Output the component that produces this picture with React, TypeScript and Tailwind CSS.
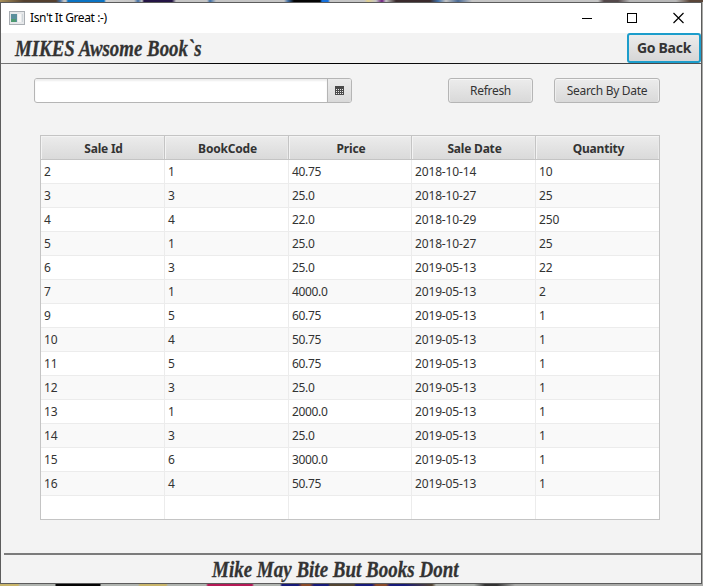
import React from "react";

const columns = ["Sale Id", "BookCode", "Price", "Sale Date", "Quantity"];

const sales = [
  ["2", "1", "40.75", "2018-10-14", "10"],
  ["3", "3", "25.0", "2018-10-27", "25"],
  ["4", "4", "22.0", "2018-10-29", "250"],
  ["5", "1", "25.0", "2018-10-27", "25"],
  ["6", "3", "25.0", "2019-05-13", "22"],
  ["7", "1", "4000.0", "2019-05-13", "2"],
  ["9", "5", "60.75", "2019-05-13", "1"],
  ["10", "4", "50.75", "2019-05-13", "1"],
  ["11", "5", "60.75", "2019-05-13", "1"],
  ["12", "3", "25.0", "2019-05-13", "1"],
  ["13", "1", "2000.0", "2019-05-13", "1"],
  ["14", "3", "25.0", "2019-05-13", "1"],
  ["15", "6", "3000.0", "2019-05-13", "1"],
  ["16", "4", "50.75", "2019-05-13", "1"],
  ["", "", "", "", ""],
];

const rowGrid = "grid h-6 grid-cols-[124px_124px_123px_124px_123px]";

function AppIcon() {
  return (
    <svg width="16" height="14" viewBox="0 0 16 14" shapeRendering="crispEdges">
      <rect x="0.5" y="0.5" width="15" height="13" fill="#e6e8ea" stroke="#a9aeb3" />
      <rect x="2" y="3" width="6" height="8" fill="#5a8f9c" />
      <rect x="2" y="8" width="5" height="3" fill="#4d9a70" />
      <rect x="9" y="3" width="3" height="8" fill="#f7f7f7" />
      <rect x="13" y="3" width="1" height="8" fill="#cfd6da" />
    </svg>
  );
}

function CalendarIcon() {
  return (
    <svg width="9" height="9" viewBox="0 0 9 9" shapeRendering="crispEdges">
      <rect width="9" height="9" fill="#4a4a4a" />
      {[3, 5, 7].map((y) =>
        [1, 3, 5, 7].map((x) => <rect key={`${x}-${y}`} x={x} y={y} width="1" height="1" fill="#e8e8e8" />),
      )}
    </svg>
  );
}

function Button({ className, children }: { className: string; children: React.ReactNode }) {
  return (
    <button
      className={`h-[25px] rounded-[3px] border border-[#b5b5b5] bg-linear-to-b from-[#ececec] to-[#d9d9d9] pt-px text-xs tracking-[-0.3px] text-[#333] shadow-[inset_0_1px_0_#f6f6f6,inset_1px_0_0_#eeeeee,inset_-1px_0_0_#eeeeee] ${className}`}
    >
      {children}
    </button>
  );
}

export default function App() {
  return (
    <div className="flex h-[586px] w-[703px] flex-col overflow-hidden bg-[#a9aaa8] font-['Noto_Sans','Open_Sans',sans-serif] text-xs text-[#333]">
      <div className="h-0.5 shrink-0 bg-linear-[90deg,#a8905a_0,#54402f_24px,#54402f_56px,#3f6ea5_60px,#c5c5c5_64px,#c5c5c5_66px,#0a74c4_68px,#0a74c4_104px,#d0d0d0_106px,#c5c5c5_134px,#3f6ea5_138px,#c5c5c5_142px,#241445_144px,#241445_172px,#c5c5c5_176px,#c5c5c5_207px,#3f6ea5_210px,#c5c5c5_216px,#c5c5c5_284px,#3f6ea5_288px,#050505_294px,#050505_320px,#1470dd_322px,#1470dd_328px,#c5c5c5_330px,#c5c5c5_364px,#e0d090_368px,#c5c5c5_376px,#702080_382px,#c5c5c5_386px,#3a2a2c_396px,#3a2a2c_430px,#3f6ea5_438px,#c5c5c5_446px,#4a6a95_458px,#c5c5c5_472px,#c5c5c5_598px,#54484a_604px,#54484a_618px,#b8b8b8_630px,#b8b8b8_676px,#5a4538_690px]" />
      <div className="flex h-[582px] w-[702px] shrink-0 flex-col border border-[#5c5c5c] bg-[#f3f3f3]">
        <div className="flex h-[30px] shrink-0 items-center bg-white pl-2 text-black">
          <AppIcon />
          <span className="ml-[5px] text-[12px] tracking-[-0.4px]">Isn't It Great :-)</span>
          <svg className="ml-auto mr-[17px]" width="102" height="12" viewBox="0 0 102 12" fill="none" stroke="#000">
            <path d="M0 6.5H10M45.5 1.5h9v9h-9z" shapeRendering="crispEdges" />
            <path d="M91.5 1l10 10M101.5 1l-10 10" strokeWidth="1.15" />
          </svg>
        </div>
        <header className="flex h-[31px] shrink-0 bg-linear-to-r from-[#777] via-black via-40% to-[#555] pb-px">
          <div className="flex flex-1 items-center bg-[#f3f3f3] pl-[14px]">
            <h1 className="origin-left scale-x-[0.82] whitespace-nowrap pt-0.5 font-['Liberation_Serif',serif] text-[23px] font-bold italic leading-[28px] [-webkit-text-stroke:0.3px_#333]">
              MIKES Awsome Book`s
            </h1>
          </div>
          <div className="bg-[#f3f3f3]">
            <button className="h-[30px] w-[74px] rounded-[3px] border-2 border-[#1c9dcb] bg-linear-to-b from-[#ececec] to-[#d6d6d6] text-[14px] font-bold tracking-[-0.3px]">
              Go Back
            </button>
          </div>
        </header>

        <div className="flex shrink-0 pl-[33px] pt-[14px]">
          <div className="flex h-[25px] w-[318px] overflow-hidden rounded-[3px] border border-[#b5b5b5] bg-white">
            <div className="flex-1 shadow-[inset_0_2px_2px_#eeeeee]" />
            <div className="flex w-[24px] items-center justify-center border-l border-[#b5b5b5] bg-linear-to-b from-[#ececec] to-[#d9d9d9]">
              <CalendarIcon />
            </div>
          </div>
          <Button className="ml-24 w-[85px]">Refresh</Button>
          <Button className="ml-[21px] w-[106px]">Search By Date</Button>
        </div>

        <div className="ml-[39px] mt-8 h-[385px] w-[620px] shrink-0 border border-[#c4c4c4] bg-white">
          <div className={`${rowGrid} bg-[#c4c4c4] font-bold tracking-[-0.2px]`}>
            {columns.map((name) => (
              <div key={name} className="border-r border-[#c4c4c4] pb-px last:border-r-0">
                <div className="flex h-[23px] items-center justify-center bg-linear-to-b from-[#ececec] to-[#dadada] pl-0.5 pt-0.5 shadow-[inset_1px_1px_0_#f3f3f3,inset_-1px_0_0_#e9e9e9]">
                  {name}
                </div>
              </div>
            ))}
          </div>
          {sales.map((sale, i) => (
            <div key={i} className={`${rowGrid} odd:bg-[#f9f9f9] even:bg-white last:h-[23px] last:bg-white`}>
              {sale.map((value, j) => (
                <div
                  key={j}
                  className={`flex items-center border-r border-[#ececec] pl-[3px] last:border-r-0 ${
                    i < sales.length - 1 ? "border-b" : ""
                  } ${j === 2 ? "tracking-[-0.35px]" : "tracking-[-0.15px]"}`}
                >
                  {value}
                </div>
              ))}
            </div>
          ))}
        </div>

        <footer className="mt-[33px] flex flex-1 items-center">
          <div className="ml-[3px] flex h-full flex-1 items-center border-t-2 border-[#7b7b7b] pl-[208px]">
            <p className="origin-left scale-x-[0.826] whitespace-nowrap pt-0.5 font-['Liberation_Serif',serif] text-[23px] font-bold italic leading-[26px] [-webkit-text-stroke:0.3px_#333]">
              Mike May Bite But Books Dont
            </p>
          </div>
        </footer>
      </div>
      <div className="h-0.5 shrink-0 bg-linear-[90deg,#c8b46a_0,#c8b46a_18px,#b0b4b0_20px,#b0b4b0_55px,#050505_56px,#050505_100px,#b0b4b0_101px,#b0b4b0_138px,#c8b46a_140px,#c8b46a_166px,#b0b4b0_168px,#b0b4b0_206px,#b51956_208px,#b51956_252px,#b0b4b0_254px,#b0b4b0_280px,#171b7a_282px,#171b7a_298px,#8a4a28_302px,#8a4a28_310px,#171b7a_314px,#171b7a_328px,#524432_330px,#524432_354px,#171b7a_356px,#171b7a_372px,#8a4a28_376px,#8a4a28_386px,#171b7a_390px,#171b7a_404px,#524432_432px,#b0b4b0_436px,#b0b4b0_474px,#333_485px,#333_497px,#a9aaa8_515px]" />
    </div>
  );
}
